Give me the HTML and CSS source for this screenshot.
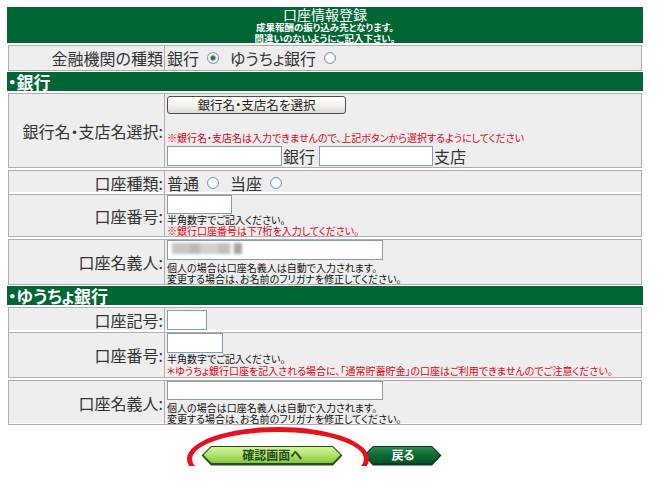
FILE: index.html
```html
<!DOCTYPE html>
<html lang="ja">
<head>
  <meta charset="UTF-8" />
  <title>口座情報登録</title>
  <link rel="stylesheet" href="styles.css">
</head>
<body>
  <div class="page">
    <div class="title-band">
      <p class="title">口座情報登録</p>
      <p class="lead">成果報酬の振り込み先となります。</p>
      <p class="lead">間違いのないようにご記入下さい。</p>
    </div>

    <div class="row h-kind">
      <div class="label">金融機関の種類</div>
      <div class="value inline">
        <span>銀行</span><input type="radio" class="radio" name="kind" checked>
        <span>ゆうちょ銀行</span><input type="radio" class="radio" name="kind">
      </div>
    </div>

    <!-- 銀行 -->
    <div class="section">・銀行</div>

    <div class="row h-bank">
      <div class="label">銀行名・支店名選択:</div>
      <div class="value top">
        <button type="button" class="pick">銀行名・支店名を選択</button>
        <p class="note warn note-pick">※銀行名・支店名は入力できませんので、上記ボタンから選択するようにしてください</p>
        <div class="branch">
          <input type="text" class="field w-bank"><span class="unit">銀行</span>
          <input type="text" class="field w-branch"><span class="unit">支店</span>
        </div>
      </div>
    </div>

    <div class="row h-type">
      <div class="label">口座種類:</div>
      <div class="value inline">
        <span>普通</span><input type="radio" class="radio" name="type">
        <span>当座</span><input type="radio" class="radio" name="type">
      </div>
    </div>

    <div class="row h-num">
      <div class="label">口座番号:</div>
      <div class="value top">
        <input type="text" class="field w-num">
        <p class="note">半角数字でご記入ください。</p>
        <p class="note warn">※銀行口座番号は下7桁を入力してください。</p>
      </div>
    </div>

    <div class="row h-holder">
      <div class="label">口座名義人:</div>
      <div class="value top">
        <span class="holder">
          <input type="text" class="field w-holder">
          <span class="masked"></span>
        </span>
        <p class="note gap">個人の場合は口座名義人は自動で入力されます。</p>
        <p class="note">変更する場合は、お名前のフリガナを修正してください。</p>
      </div>
    </div>

    <!-- ゆうちょ銀行 -->
    <div class="section">・ゆうちょ銀行</div>

    <div class="row h-mark">
      <div class="label">口座記号:</div>
      <div class="value">
        <input type="text" class="field w-mark">
      </div>
    </div>

    <div class="row h-ynum">
      <div class="label">口座番号:</div>
      <div class="value top">
        <input type="text" class="field w-ynum">
        <p class="note tall">半角数字でご記入ください。</p>
        <p class="note tall warn">＊ゆうちょ銀行口座を記入される場合に、「通常貯蓄貯金」の口座はご利用できませんのでご注意ください。</p>
      </div>
    </div>

    <div class="row h-yholder">
      <div class="label">口座名義人:</div>
      <div class="value top">
        <input type="text" class="field w-holder thin">
        <p class="note gap">個人の場合は口座名義人は自動で入力されます。</p>
        <p class="note">変更する場合は、お名前のフリガナを修正してください。</p>
      </div>
    </div>

    <div class="actions">
      <a href="#" class="go">
        <svg width="142" height="21" viewBox="0 0 142 21">
          <defs>
            <linearGradient id="goFill" x1="0" y1="0" x2="0" y2="1">
              <stop offset="0" stop-color="#d4f2a0"/>
              <stop offset="0.5" stop-color="#b2e26a"/>
              <stop offset="1" stop-color="#86c83a"/>
            </linearGradient>
          </defs>
          <polygon points="0.5,10.5 10,1 132,1 141.5,10.5 132,20.5 10,20.5" fill="#23501a"/>
          <polygon points="2.5,10 10.5,2 131.5,2 139.5,10 131.5,18 10.5,18" fill="url(#goFill)"/>
          <text x="71" y="14.5" text-anchor="middle" class="btn-text dark">確認画面へ</text>
        </svg>
      </a>
      <a href="#" class="back">
        <svg width="79" height="21" viewBox="0 0 79 21">
          <defs>
            <linearGradient id="backFill" x1="0" y1="0" x2="0" y2="1">
              <stop offset="0" stop-color="#2f8a4e"/>
              <stop offset="0.5" stop-color="#0b6a33"/>
              <stop offset="1" stop-color="#04552a"/>
            </linearGradient>
          </defs>
          <polygon points="0.5,10.5 10,1 69,1 78.5,10.5 69,20.5 10,20.5" fill="#0d3a1c"/>
          <polygon points="2.5,10 10.5,2 68.5,2 76.5,10 68.5,18 10.5,18" fill="url(#backFill)"/>
          <text x="40" y="14.5" text-anchor="middle" class="btn-text light">戻る</text>
        </svg>
      </a>
    </div>
  </div>
</body>
</html>
```

FILE: styles.css
```css
* {
  box-sizing: border-box;
}

body {
  margin: 0;
  background: #fff;
  color: #222;
  font-family: "Noto Sans CJK JP", "Noto Sans", sans-serif;
  font-feature-settings: "palt";
}

p {
  margin: 0;
}

.page {
  width: 636px;
  margin: 7px 0 0 7px;
  display: flex;
  flex-direction: column;
  gap: 2px;
}

/* green title block */
.title-band {
  height: 36px;
  background: #006633;
  color: #fff;
  text-align: center;
}

.title {
  font-size: 14px;
  line-height: 15px;
}

.lead {
  font-size: 9.5px;
  font-weight: bold;
  line-height: 10.5px;
}

.section {
  height: 19px;
  background: #006633;
  color: #fff;
  font-size: 17px;
  font-weight: bold;
  line-height: 19px;
  padding-left: 1px;
}

/* form rows */
.row {
  display: grid;
  grid-template-columns: 157px 1fr;
  margin: 0 1px;
  background: #eeeeee;
}

.label,
.value {
  border: 1px solid #b5abab;
}

.label {
  display: flex;
  align-items: center;
  justify-content: flex-end;
  font-size: 16px;
  color: #333;
  padding-right: 1px;
}

.value {
  border-left: none;
  padding-left: 2px;
  display: flex;
  flex-direction: column;
  justify-content: center;
  align-items: flex-start;
}

.value.top {
  justify-content: flex-start;
}

.value.inline {
  flex-direction: row;
  justify-content: flex-start;
  align-items: center;
  font-size: 16px;
  color: #333;
}

.h-kind { height: 25px; }
.h-bank { height: 75px; }
.h-type { height: 22px; }
.h-num { height: 43px; }
.h-holder { height: 45px; }
.h-mark { height: 23px; }
.h-ynum { height: 46px; }
.h-yholder { height: 43px; }

.radio {
  appearance: none;
  -webkit-appearance: none;
  width: 12px;
  height: 12px;
  margin: 0 11px 0 8px;
  border: 1px solid #7e97b3;
  border-radius: 50%;
  background: radial-gradient(circle, #fff 0, #fff 3px, #dfe6ee 6px);
}

.radio:checked {
  background: radial-gradient(circle, #2f7d3a 0, #2f7d3a 2px, #d8e8d4 3px, #fff 4px, #dfe6ee 6px);
}

.field {
  display: block;
  height: 20px;
  margin: 0;
  padding: 0 2px;
  border: 1px solid #7f9db9;
  background: #fff;
  font-size: 12px;
}

.field.thin {
  height: 19px;
}

.w-bank { width: 115px; }
.w-branch { width: 114px; margin-left: 4px; }
.w-num { width: 65px; height: 19px; }
.w-holder { width: 216px; }
.w-mark { width: 40px; }
.w-ynum { width: 56px; }

.pick {
  width: 179px;
  height: 18px;
  margin-top: 2px;
  padding: 0;
  border: 1px solid #4d4d4d;
  border-radius: 3px;
  background: linear-gradient(#ffffff, #f1efe6 60%, #dedbd0);
  color: #222;
  font-family: inherit;
  font-feature-settings: "palt";
  font-size: 12.5px;
  line-height: 16px;
}

.branch {
  display: flex;
  align-items: center;
  margin-top: 2px;
}

.unit {
  font-size: 16px;
  line-height: 20px;
  color: #333;
  margin-left: 1px;
}

.note {
  font-size: 10px;
  line-height: 11px;
  white-space: nowrap;
  color: #111;
}

.note.warn {
  color: #e60012;
}

.note-pick {
  margin-top: 18px;
  line-height: 12px;
}

.note.gap {
  margin-top: 2px;
}

.note.tall {
  line-height: 12px;
}

/* blurred name inside the holder field */
.holder {
  position: relative;
  display: flex;
}

.masked {
  position: absolute;
  left: 5px;
  top: 3px;
  width: 70px;
  height: 11px;
  background: linear-gradient(90deg, #c6c6c6 0 18px, #b8b8b8 18px 28px, #cfcfcf 28px 46px, #bfbfbf 46px 58px, #f4f4f4 58px 62px, #a2a2a2 62px 70px);
  filter: blur(1.5px);
}

/* bottom buttons */
.actions {
  display: flex;
  justify-content: center;
  gap: 20px;
  margin-top: 20px;
  padding-right: 7px;
}

.go,
.back {
  display: block;
  height: 21px;
}

.go {
  position: relative;
}

.go::after {
  content: "";
  position: absolute;
  left: -14px;
  top: -18px;
  width: 172px;
  height: 54px;
  border: 5px solid #e8101a;
  border-radius: 50%;
}

.btn-text {
  font-family: "Noto Sans CJK JP", sans-serif;
  font-size: 12px;
  font-weight: bold;
}

.btn-text.dark {
  fill: #1f4d1c;
}

.btn-text.light {
  fill: #fff;
}
```
